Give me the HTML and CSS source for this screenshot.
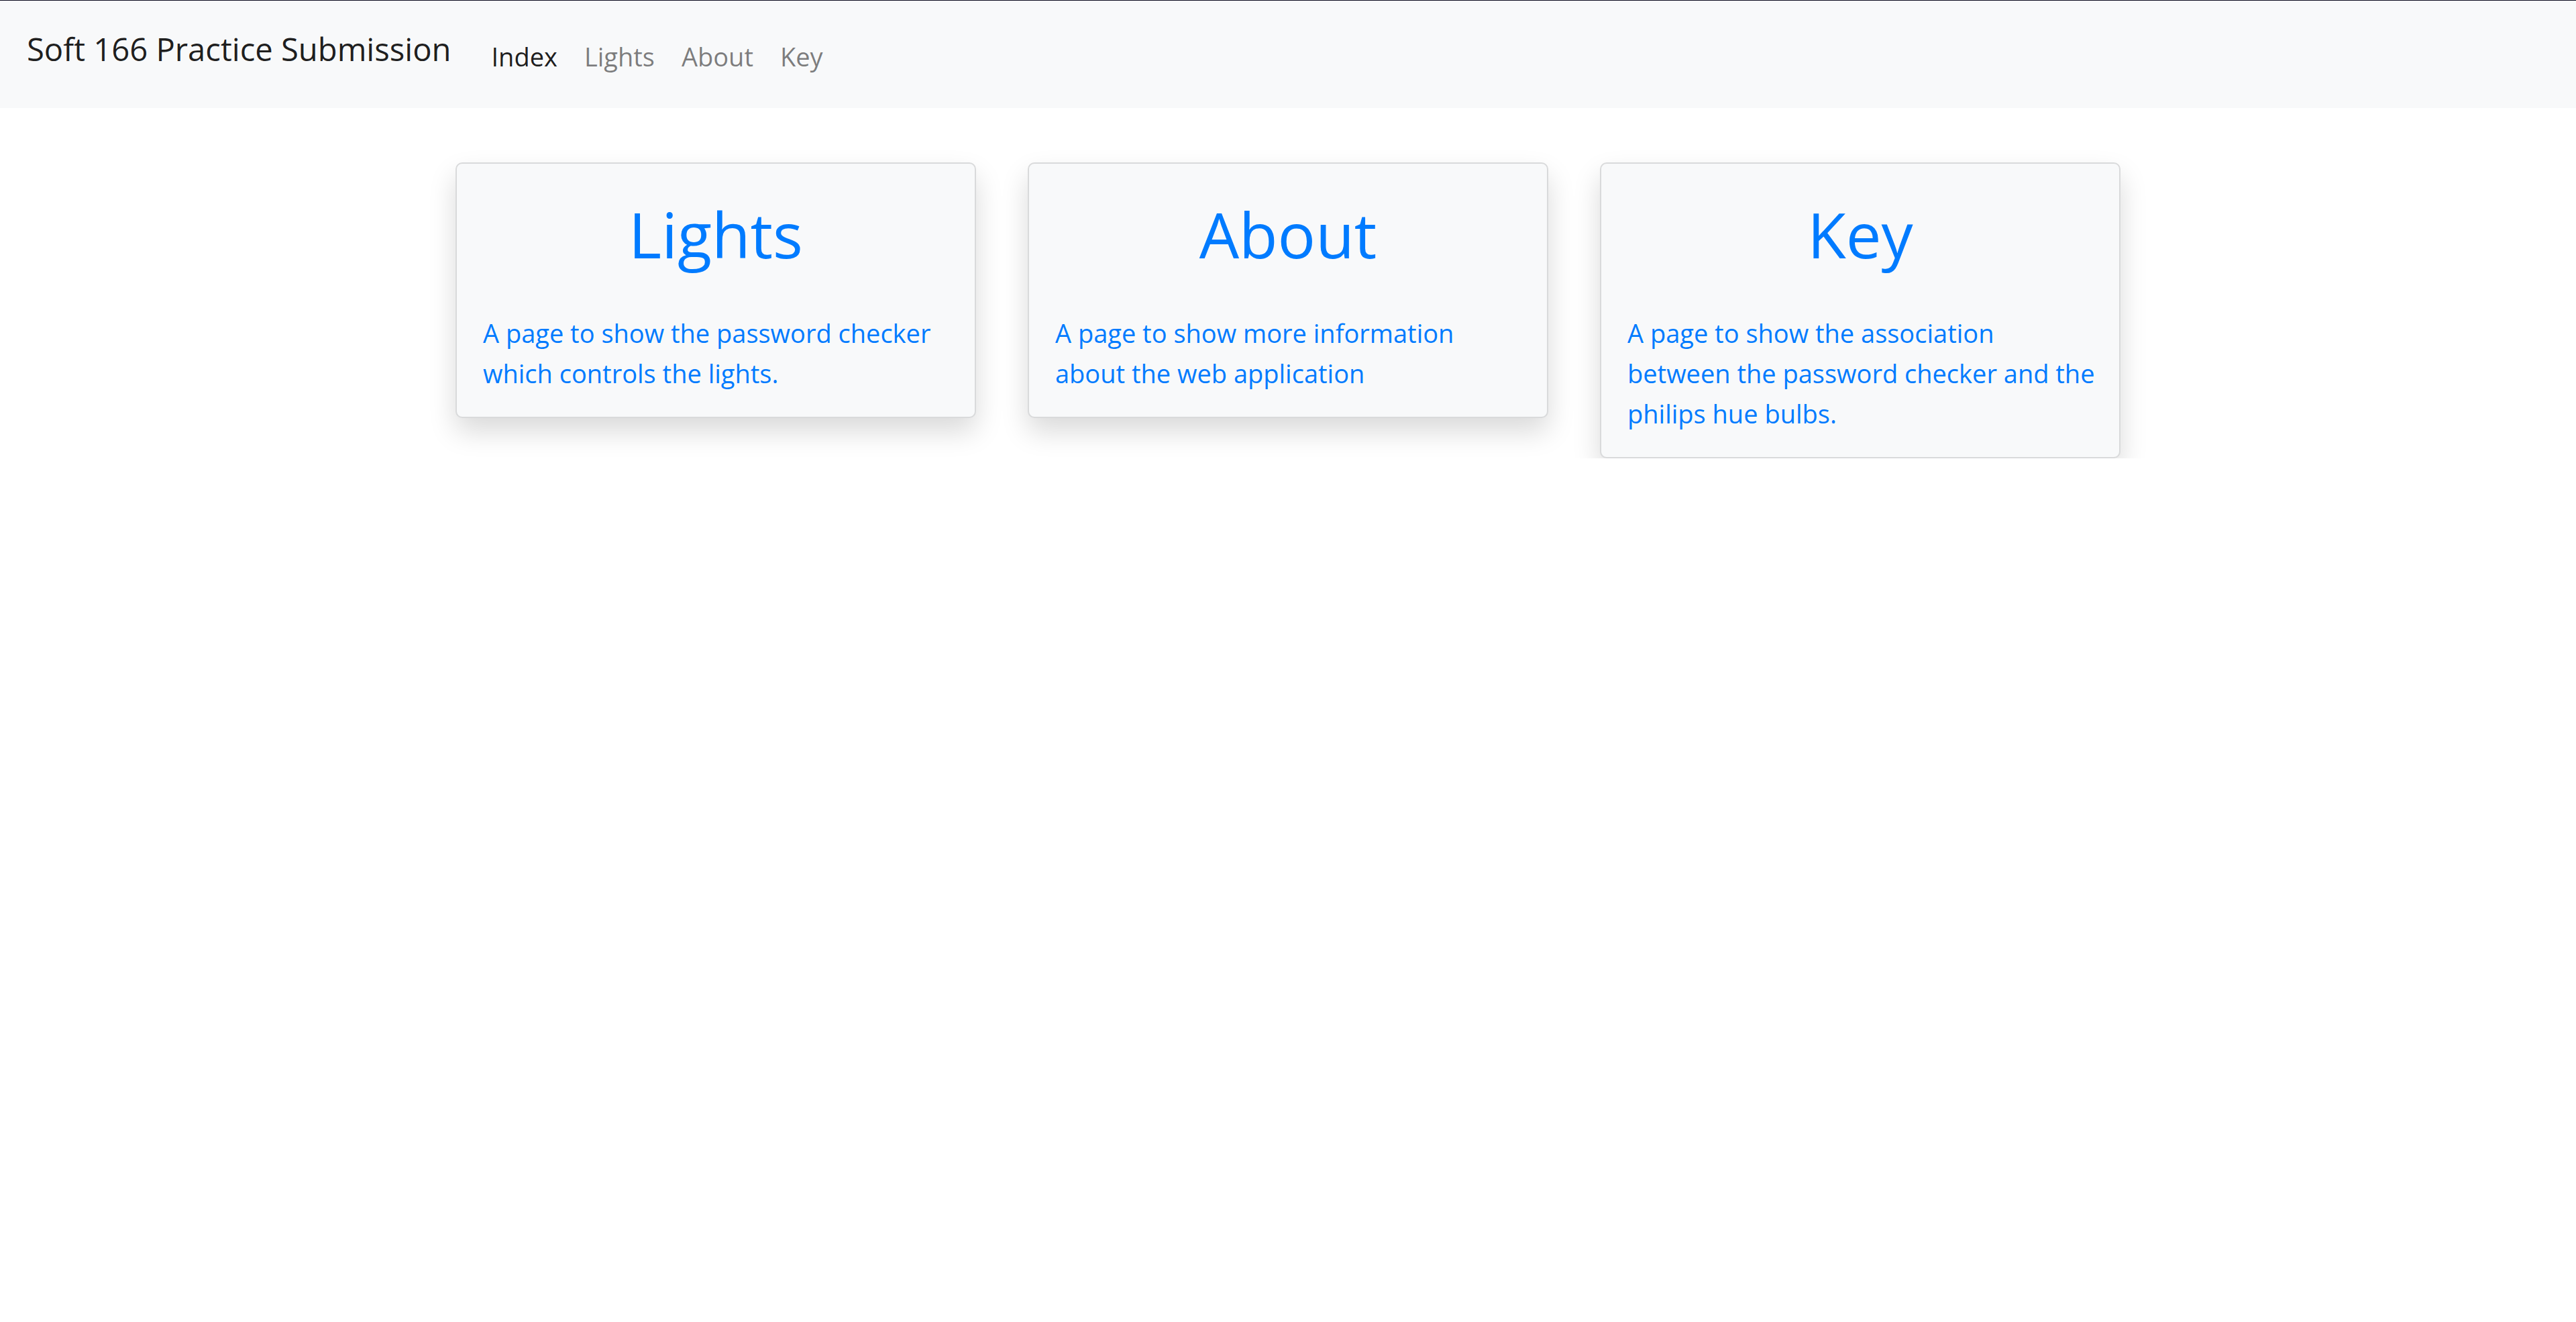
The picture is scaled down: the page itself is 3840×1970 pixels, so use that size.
FILE: index.html
```html
<!DOCTYPE html>
<html lang="en">
<head>
<meta charset="utf-8">
<title>Soft 166 Practice Submission</title>
<link rel="stylesheet" href="styles.css">
</head>
<body>
<nav class="navbar">
  <a class="brand" href="#">Soft 166 Practice Submission</a>
  <ul class="nav">
    <li><a class="nav-link active" href="#">Index</a></li>
    <li><a class="nav-link" href="#">Lights</a></li>
    <li><a class="nav-link" href="#">About</a></li>
    <li><a class="nav-link" href="#">Key</a></li>
  </ul>
</nav>
<main class="cards">
  <a class="card" href="#">
    <h1 class="card-title">Lights</h1>
    <p class="card-text">A page to show the password checker<br>which controls the lights.</p>
  </a>
  <a class="card" href="#">
    <h1 class="card-title">About</h1>
    <p class="card-text">A page to show more information<br>about the web application</p>
  </a>
  <a class="card" href="#">
    <h1 class="card-title">Key</h1>
    <p class="card-text">A page to show the association<br>between the password checker and the<br>philips hue bulbs.</p>
  </a>
</main>
</body>
</html>
```

FILE: styles.css
```css
html, body {
  margin: 0;
  padding: 0;
  background: #ffffff;
}

body {
  border-top: 1px solid #0b0b1e;
  font-family: "Open Sans", "Noto Sans", "Liberation Sans", sans-serif;
}

.navbar {
  display: flex;
  align-items: flex-start;
  height: 160px;
  box-sizing: border-box;
  padding: 0 40px;
  background: #f8f9fa;
}

.brand {
  font-size: 47.2px;
  line-height: 72px;
  padding-top: 36px;
  margin-right: 40px;
  color: rgba(0, 0, 0, 0.9);
  text-decoration: none;
  white-space: nowrap;
}

.nav {
  display: flex;
  list-style: none;
  margin: 0;
  padding: 55px 0 0 0;
}

.nav-link {
  display: block;
  font-size: 38px;
  line-height: 56px;
  padding: 0 20px;
  color: rgba(0, 0, 0, 0.5);
  text-decoration: none;
}

.nav-link.active {
  color: rgba(0, 0, 0, 0.9);
}

.cards {
  display: flex;
  justify-content: center;
  align-items: flex-start;
  gap: 77px;
  margin-top: 81px;
}

.card {
  display: block;
  width: 776px;
  box-sizing: border-box;
  padding: 49px 39px 35px 39px;
  background: #f8f9fa;
  border: 2px solid #d9dadb;
  border-radius: 10px;
  box-shadow: 0 20px 40px rgba(0, 0, 0, 0.15);
  color: #007bff;
  text-decoration: none;
}

.card-title {
  margin: 0 0 60px 0;
  font-size: 94px;
  font-weight: 400;
  line-height: 113px;
  text-align: center;
}

.card-text {
  margin: 0;
  font-size: 38px;
  line-height: 60px;
  white-space: nowrap;
}
```
